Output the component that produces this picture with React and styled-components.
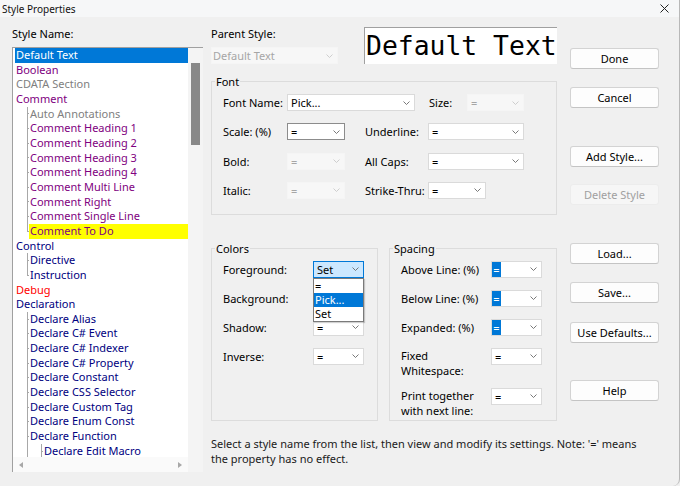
import React from 'react';
import styled, { createGlobalStyle, css } from 'styled-components';

const Global = createGlobalStyle`
  html, body { margin: 0; padding: 0; background: #f0f0f0; }
  body { font-family: "Noto Sans", "Open Sans", sans-serif; font-size: 11px; color: #000; }
  * { box-sizing: border-box; }
`;

const Window = styled.div`
  width: 680px;
  height: 486px;
  background: #f0f0f0;
  display: flex;
  flex-direction: column;
  overflow: hidden;
  border-right: 1px solid #b8b8b8;
  border-bottom-right-radius: 7px;
`;

const TitleBar = styled.div`
  flex: none;
  height: 17px;
  display: flex;
  align-items: center;
  justify-content: space-between;
  padding: 0 10px 0 2px;
  background: #f6f7f8;
  font-size: 10px;
  color: #111;
`;

const Body = styled.div`
  flex: 1;
  display: flex;
  padding-left: 12px;
`;

const LeftCol = styled.div`
  width: 191px;
  padding-top: 9px;
  display: flex;
  flex-direction: column;
`;

const Caption = styled.div`
  line-height: 15px;
  height: 15px;
  white-space: nowrap;
`;

const ListBox = styled.div`
  margin-top: 6px;
  height: 425px;
  border-top: 1px solid #a0a0a0;
  border-left: 1px solid #a0a0a0;
  display: grid;
  grid-template-columns: 1fr 15px;
  grid-template-rows: 1fr 15px;
`;

const Items = styled.div`
  background: #fff;
  overflow: hidden;
  padding-left: 2px;
`;

const Row = styled.div`
  display: flex;
  height: 14.667px;
  line-height: 14.667px;
  white-space: nowrap;
`;

const Guide = styled.span`
  flex: none;
  width: 14px;
  align-self: stretch;
  background:
    ${p => (p.$v === 'none' ? 'none' : css`linear-gradient(#a8a8a8, #a8a8a8) 12px 0 / 1px ${p.$v === 'half' ? '50%' : '100%'} no-repeat`)}
    ${p => (p.$tick ? css`, linear-gradient(#a8a8a8, #a8a8a8) 12px 50% / 3px 1px no-repeat` : '')};
`;

const ItemText = styled.span`
  flex: 1;
  padding: 0 1px;
  color: ${p => p.$c};
  ${p => p.$sel && css`background: #0078d7; color: #fff;`}
  ${p => p.$mark && css`background: #ffff00;`}
`;

const VScroll = styled.div`
  grid-column: 2;
  grid-row: 1 / 3;
  background: #f4f4f4;
  padding: 15px 3px 0 3px;
`;

const Thumb = styled.div`
  width: 9px;
  height: 82px;
  background: #888;
`;

const HScroll = styled.div`
  grid-column: 1;
  grid-row: 2;
  background: #fafafa;
  display: flex;
  align-items: center;
  justify-content: space-between;
  padding: 0 6px 0 6px;
`;

const MidCol = styled.div`
  width: 346px;
  margin-left: 8px;
  padding-top: 9px;
  display: flex;
  flex-direction: column;
`;

const TopRow = styled.div`
  display: flex;
  justify-content: space-between;
  height: 38px;
`;

const ParentBlock = styled.div`
  display: flex;
  flex-direction: column;
  gap: 6px;
`;

const Preview = styled.div`
  margin-top: 1px;
  width: 193px;
  height: 37px;
  background: #fff;
  border-top: 1px solid #a0a0a0;
  border-left: 1px solid #a0a0a0;
  font-family: "DejaVu Sans Mono", "Liberation Mono", monospace;
  font-size: 26.4px;
  line-height: 36px;
  padding-left: 1px;
  white-space: nowrap;
  overflow: hidden;
  color: #000;
`;

const Group = styled.fieldset`
  margin: ${p => p.$mt || 0}px 0 0 0;
  min-width: 0;
  width: ${p => p.$w}px;
  ${p => p.$h && css`height: ${p.$h}px;`}
  border: 1px solid #dcdcdc;
  padding: 0 0 ${p => p.$pb || 0}px 11px;
`;

const Legend = styled.legend`
  padding: 0 1px;
  margin-left: -8px;
  line-height: 13px;
`;

const Rows = styled.div`
  padding-top: 6px;
  display: flex;
  flex-direction: column;
  gap: ${p => p.$gap}px;
`;

const FormRow = styled.div`
  display: flex;
  align-items: ${p => (p.$top ? 'flex-start' : 'center')};
  min-height: 17px;
  margin-top: ${p => p.$mt || 0}px;
`;

const Label = styled.span`
  flex: none;
  width: ${p => p.$w}px;
  margin-left: ${p => p.$ml || 0}px;
  line-height: 15px;
  white-space: nowrap;
  color: #000;
`;

const Box = styled.div`
  position: relative;
  flex: none;
  width: ${p => p.$w}px;
  height: 17px;
  display: flex;
  align-items: center;
  padding-left: ${p => (p.$hl ? 0 : p.$pl ?? 3)}px;
  background: #fff;
  border: 1px solid #dadada;
  color: #000;
  ${p => p.$dark && css`border-color: #8c8c8c;`}
  ${p => p.$disabled && css`background: #f7f7f7; border-color: #f5f5f5; color: #a6a6a6;`}
  ${p => p.$active && css`background: #cce8ff; border-color: #0078d7;`}
`;

const Value = styled.span`
  flex: 1;
  line-height: 15px;
  white-space: nowrap;
  overflow: hidden;
`;

const Hl = styled.span`
  display: inline-block;
  width: 9px;
  height: 15px;
  line-height: 15px;
  background: #0078d7;
  color: #fff;
  text-align: center;
`;

const ChevronSvg = styled.svg`
  flex: none;
  margin-right: 4px;
`;

const Menu = styled.div`
  position: absolute;
  left: -1px;
  top: 16px;
  width: calc(100% + 2px);
  background: #fff;
  border: 1px solid #7a7a7a;
  box-shadow: 1px 1px 1px rgba(0, 0, 0, 0.18);
  z-index: 2;
`;

const MenuItem = styled.div`
  height: 14px;
  line-height: 14px;
  padding-left: 1px;
  color: #000;
  ${p => p.$sel && css`background: #0078d7; color: #fff;`}
`;

const GroupRow = styled.div`
  display: flex;
  justify-content: space-between;
  margin-top: 27px;
`;

const Note = styled.div`
  margin-top: 15px;
  line-height: 15px;
  color: #1a1a1a;
  width: 438px;
`;

const RightCol = styled.div`
  width: 89px;
  margin-left: 13px;
  display: flex;
  flex-direction: column;
`;

const Button = styled.button`
  display: block;
  width: 89px;
  height: 21px;
  margin-top: ${p => p.$mt}px;
  padding: 0;
  font: inherit;
  font-size: 11px;
  color: #000;
  background: #fdfdfd;
  border: 1px solid #d3d3d3;
  border-bottom-color: #c4c4c4;
  border-radius: 3px;
  &:disabled {
    background: #f6f6f6;
    color: #a0a0a0;
    border-color: #ececec;
  }
`;

const Chevron = ({ disabled }) => (
  <ChevronSvg width="7" height="4" viewBox="0 0 7 4">
    <polyline points="0.5,0.5 3.5,3.5 6.5,0.5" fill="none" stroke={disabled ? '#c8c8c8' : '#6a6a6a'} strokeWidth="0.9" />
  </ChevronSvg>
);

const Select = ({ w, value, disabled, dark, active, hl, pl, children }) => (
  <Box $w={w} $disabled={disabled} $dark={dark} $active={active} $hl={hl} $pl={pl}>
    <Value>{hl ? <Hl>{value}</Hl> : value}</Value>
    <Chevron disabled={disabled} />
    {children}
  </Box>
);

const P = '#800080';
const G = '#808080';
const N = '#000080';
const C1 = [{ v: 'full', tick: true }];
const CL = [{ v: 'half', tick: true }];
const C2 = [{ v: 'full' }, { v: 'full', tick: true }];

const items = [
  { t: 'Default Text', c: '#000', sel: true },
  { t: 'Boolean', c: P },
  { t: 'CDATA Section', c: G },
  { t: 'Comment', c: P },
  { t: 'Auto Annotations', c: G, g: C1 },
  { t: 'Comment Heading 1', c: P, g: C1 },
  { t: 'Comment Heading 2', c: P, g: C1 },
  { t: 'Comment Heading 3', c: P, g: C1 },
  { t: 'Comment Heading 4', c: P, g: C1 },
  { t: 'Comment Multi Line', c: P, g: C1 },
  { t: 'Comment Right', c: P, g: C1 },
  { t: 'Comment Single Line', c: P, g: C1 },
  { t: 'Comment To Do', c: P, g: CL, mark: true },
  { t: 'Control', c: N },
  { t: 'Directive', c: N, g: C1 },
  { t: 'Instruction', c: N, g: CL },
  { t: 'Debug', c: '#ff0000' },
  { t: 'Declaration', c: N },
  { t: 'Declare Alias', c: N, g: C1 },
  { t: 'Declare C# Event', c: N, g: C1 },
  { t: 'Declare C# Indexer', c: N, g: C1 },
  { t: 'Declare C# Property', c: N, g: C1 },
  { t: 'Declare Constant', c: N, g: C1 },
  { t: 'Declare CSS Selector', c: N, g: C1 },
  { t: 'Declare Custom Tag', c: N, g: C1 },
  { t: 'Declare Enum Const', c: N, g: C1 },
  { t: 'Declare Function', c: N, g: C1 },
  { t: 'Declare Edit Macro', c: N, g: C2 },
];

export default function App() {
  return (
    <>
      <Global />
      <Window>
        <TitleBar>
          <span>Style Properties</span>
          <svg width="9" height="9" viewBox="0 0 9 9">
            <path d="M0.5 0.5 L8.5 8.5 M8.5 0.5 L0.5 8.5" stroke="#222" strokeWidth="1" />
          </svg>
        </TitleBar>
        <Body>
          <LeftCol>
            <Caption>Style Name:</Caption>
            <ListBox>
              <Items>
                {items.map(it => (
                  <Row key={it.t}>
                    {(it.g || []).map((g, i) => (
                      <Guide key={i} $v={g.v} $tick={g.tick} />
                    ))}
                    <ItemText $c={it.c} $sel={it.sel} $mark={it.mark}>{it.t}</ItemText>
                  </Row>
                ))}
              </Items>
              <VScroll>
                <Thumb />
              </VScroll>
              <HScroll>
                <svg width="4" height="6" viewBox="0 0 4 6"><polygon points="4,0 0,3 4,6" fill="#a8a8a8" /></svg>
                <svg width="4" height="6" viewBox="0 0 4 6"><polygon points="0,0 4,3 0,6" fill="#a8a8a8" /></svg>
              </HScroll>
            </ListBox>
          </LeftCol>

          <MidCol>
            <TopRow>
              <ParentBlock>
                <Caption>Parent Style:</Caption>
                <Select w={127} value="Default Text" disabled pl={1} />
              </ParentBlock>
              <Preview>Default Text</Preview>
            </TopRow>

            <Group $w={346} $mt={11} $pb={15}>
              <Legend>Font</Legend>
              <Rows $gap={12.33}>
                <FormRow>
                  <Label $w={64}>Font Name:</Label>
                  <Select w={128} value="Pick..." />
                  <Label $w={38} $ml={14}>Size:</Label>
                  <Select w={57} value="=" disabled />
                </FormRow>
                <FormRow>
                  <Label $w={64}>Scale: (%)</Label>
                  <Select w={58} value="=" dark />
                  <Label $w={63} $ml={20}>Underline:</Label>
                  <Select w={96} value="=" />
                </FormRow>
                <FormRow>
                  <Label $w={64}>Bold:</Label>
                  <Select w={58} value="=" disabled />
                  <Label $w={63} $ml={20}>All Caps:</Label>
                  <Select w={96} value="=" />
                </FormRow>
                <FormRow>
                  <Label $w={64}>Italic:</Label>
                  <Select w={58} value="=" disabled />
                  <Label $w={63} $ml={20}>Strike-Thru:</Label>
                  <Select w={58} value="=" />
                </FormRow>
              </Rows>
            </Group>

            <GroupRow>
              <Group $w={167} $h={179}>
                <Legend>Colors</Legend>
                <Rows $gap={12}>
                  <FormRow>
                    <Label $w={90}>Foreground:</Label>
                    <Select w={51} value="Set" active>
                      <Menu>
                        <MenuItem>=</MenuItem>
                        <MenuItem $sel>Pick...</MenuItem>
                        <MenuItem>Set</MenuItem>
                      </Menu>
                    </Select>
                  </FormRow>
                  <FormRow>
                    <Label $w={90}>Background:</Label>
                    <Select w={51} value="=" />
                  </FormRow>
                  <FormRow>
                    <Label $w={90}>Shadow:</Label>
                    <Select w={51} value="=" />
                  </FormRow>
                  <FormRow>
                    <Label $w={90}>Inverse:</Label>
                    <Select w={51} value="=" />
                  </FormRow>
                </Rows>
              </Group>
              <Group $w={168} $h={179}>
                <Legend>Spacing</Legend>
                <Rows $gap={12}>
                  <FormRow>
                    <Label $w={90}>Above Line: (%)</Label>
                    <Select w={51} value="=" hl />
                  </FormRow>
                  <FormRow>
                    <Label $w={90}>Below Line: (%)</Label>
                    <Select w={51} value="=" hl />
                  </FormRow>
                  <FormRow>
                    <Label $w={90}>Expanded: (%)</Label>
                    <Select w={51} value="=" hl />
                  </FormRow>
                  <FormRow $top>
                    <Label $w={90}>Fixed<br />Whitespace:</Label>
                    <Select w={51} value="=" />
                  </FormRow>
                  <FormRow $top $mt={-2}>
                    <Label $w={90}>Print together<br />with next line:</Label>
                    <Select w={51} value="=" />
                  </FormRow>
                </Rows>
              </Group>
            </GroupRow>

            <Note>
              Select a style name from the list, then view and modify its settings. Note: '=' means the property has no effect.
            </Note>
          </MidCol>

          <RightCol>
            <Button $mt={31}>Done</Button>
            <Button $mt={18}>Cancel</Button>
            <Button $mt={38}>Add Style...</Button>
            <Button $mt={17} disabled>Delete Style</Button>
            <Button $mt={38}>Load...</Button>
            <Button $mt={18}>Save...</Button>
            <Button $mt={19}>Use Defaults...</Button>
            <Button $mt={37}>Help</Button>
          </RightCol>
        </Body>
      </Window>
    </>
  );
}
